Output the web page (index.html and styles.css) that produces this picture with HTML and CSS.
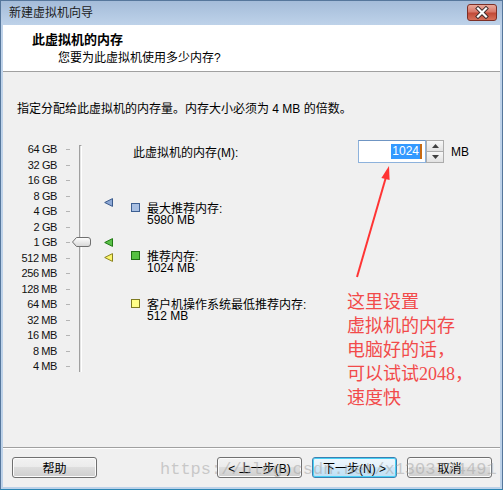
FILE: index.html
```html
<!DOCTYPE html>
<html lang="zh-CN">
<head>
<meta charset="utf-8">
<title>新建虚拟机向导</title>
<link rel="stylesheet" href="styles.css">
</head>
<body>
<div class="window">
  <div class="titlebar">
    <span class="title">新建虚拟机向导</span>
    <div class="close">
      <svg width="30" height="17" viewBox="0 0 30 17">
        <path d="M11 4.5 L19 12.5 M19 4.5 L11 12.5" stroke="#3a2a2a" stroke-width="4" stroke-linecap="square"/>
        <path d="M11 4.5 L19 12.5 M19 4.5 L11 12.5" stroke="#ffffff" stroke-width="2.2" stroke-linecap="square"/>
      </svg>
    </div>
  </div>
  <div class="client">
    <div class="header">
      <div class="h-title">此虚拟机的内存</div>
      <div class="h-sub">您要为此虚拟机使用多少内存?</div>
    </div>
    <div class="body">
      <p class="intro">指定分配给此虚拟机的内存量。内存大小必须为 4 MB 的倍数。</p>
      <div class="main">
        <div class="slider">
          <div class="labels">
            <div class="lab">64 GB</div>
            <div class="lab">32 GB</div>
            <div class="lab">16 GB</div>
            <div class="lab">8 GB</div>
            <div class="lab">4 GB</div>
            <div class="lab">2 GB</div>
            <div class="lab">1 GB</div>
            <div class="lab">512 MB</div>
            <div class="lab">256 MB</div>
            <div class="lab">128 MB</div>
            <div class="lab">64 MB</div>
            <div class="lab">32 MB</div>
            <div class="lab">16 MB</div>
            <div class="lab">8 MB</div>
            <div class="lab">4 MB</div>
          </div>
          <div class="ticks">
            <div class="tick"></div><div class="tick"></div><div class="tick"></div>
            <div class="tick"></div><div class="tick"></div><div class="tick"></div>
            <div class="tick"></div><div class="tick"></div><div class="tick"></div>
            <div class="tick"></div><div class="tick"></div><div class="tick"></div>
            <div class="tick"></div><div class="tick"></div><div class="tick"></div>
          </div>
          <div class="track"></div>
          <svg class="thumb" width="19" height="10" viewBox="0 0 19 10">
            <defs>
              <linearGradient id="tg" x1="0" y1="0" x2="0" y2="1">
                <stop offset="0" stop-color="#ffffff"/>
                <stop offset="1" stop-color="#d6d6d6"/>
              </linearGradient>
            </defs>
            <path d="M0.5 5 L4.5 0.5 L16 0.5 Q18.5 0.5 18.5 3 L18.5 7 Q18.5 9.5 16 9.5 L4.5 9.5 Z" fill="url(#tg)" stroke="#707070"/>
          </svg>
          <svg class="mark mark-max" width="10" height="9" viewBox="0 0 10 9">
            <path d="M0.7 4.5 L8.5 0.6 L8.5 8.4 Z" fill="#8ea9d6" stroke="#3a5a8c"/>
          </svg>
          <svg class="mark mark-rec" width="10" height="9" viewBox="0 0 10 9">
            <path d="M0.7 4.5 L8.5 0.6 L8.5 8.4 Z" fill="#5cc24a" stroke="#217a14"/>
          </svg>
          <svg class="mark mark-min" width="10" height="9" viewBox="0 0 10 9">
            <path d="M0.7 4.5 L8.5 0.6 L8.5 8.4 Z" fill="#fbf56a" stroke="#8a8220"/>
          </svg>
        </div>
        <div class="right">
          <div class="mem-row">
            <span class="mem-label">此虚拟机的内存(M):</span>
            <div class="spin">
              <div class="spin-input"><span class="sel">1024</span><span class="caret"></span></div>
              <div class="spin-btns">
                <div class="sb"><svg width="7" height="4" viewBox="0 0 7 4"><path d="M0 4 L3.5 0 L7 4 Z" fill="#404040"/></svg></div>
                <div class="sb"><svg width="7" height="4" viewBox="0 0 7 4"><path d="M0 0 L3.5 4 L7 0 Z" fill="#404040"/></svg></div>
              </div>
            </div>
            <span class="mb">MB</span>
          </div>
          <div class="legend">
            <div class="lg">
              <div class="lg-row"><span class="sq sq-max"></span><span>最大推荐内存:</span></div>
              <div class="lg-val">5980 MB</div>
            </div>
            <div class="lg">
              <div class="lg-row"><span class="sq sq-rec"></span><span>推荐内存:</span></div>
              <div class="lg-val">1024 MB</div>
            </div>
            <div class="lg">
              <div class="lg-row"><span class="sq sq-min"></span><span>客户机操作系统最低推荐内存:</span></div>
              <div class="lg-val">512 MB</div>
            </div>
          </div>
        </div>
      </div>
    </div>
    <div class="footer">
      <button class="btn">帮助</button>
      <div class="spacer"></div>
      <button class="btn">&lt; 上一步(B)</button>
      <button class="btn btn-default">下一步(N) &gt;</button>
      <button class="btn">取消</button>
    </div>
  </div>
</div>

<svg class="arrow" width="503" height="490" viewBox="0 0 503 490">
  <line x1="357" y1="277" x2="386" y2="177" stroke="#ff3434" stroke-width="2"/>
  <path d="M389 166 L381.4 178 L389.6 180 Z" fill="#ff3434"/>
</svg>
<div class="note">这里设置<br>虚拟机的内存<br>电脑好的话，<br>可以试试2048，<br>速度快</div>
<div class="watermark">https://blog.csdn.net/x1303774491</div>
</body>
</html>
```
FILE: styles.css
```css
* { box-sizing: border-box; }
html, body { margin: 0; padding: 0; }
body {
  position: relative;
  width: 503px;
  height: 490px;
  overflow: hidden;
  font-family: "Liberation Sans", "Noto Sans CJK SC", sans-serif;
  font-size: 12px;
  color: #000;
  background: #bcd0e7;
}
.window {
  width: 503px;
  height: 490px;
  display: flex;
  flex-direction: column;
  background: linear-gradient(#a4bcd9 0, #bfd3ea 25px, #bdd2e9 100%);
  border: 1px solid #56779c;
  border-bottom-color: #2b86b4;
  padding: 0 2px 2px;
}
.titlebar {
  height: 24px;
  display: flex;
  align-items: center;
  justify-content: space-between;
  padding: 0 3px 0 6px;
}
.title { font-size: 12px; line-height: 16px; color: #1b1b1b; }
.close {
  width: 30px;
  height: 17px;
  margin-top: -1px;
  border: 1px solid #7c2f26;
  border-radius: 3px;
  background: linear-gradient(#e9a99b 0, #d8786a 45%, #c14a38 55%, #d6705a 100%);
  display: flex;
}
.close svg { margin: -1px; }
.client {
  flex: 1;
  display: flex;
  flex-direction: column;
  background: #f0f0f0;
}
.header {
  height: 47px;
  background: #fff;
  border-bottom: 1px solid #a0a0a0;
  padding: 7px 0 0 29px;
}
.h-title { font-size: 13px; font-weight: bold; line-height: 16px; }
.h-sub { margin-top: 2px; padding-left: 26px; line-height: 16px; }
.body { flex: 1; padding-top: 29px; }
.intro { margin: 0 0 23px; padding-left: 14px; line-height: 16px; }
.main { display: flex; }
.slider {
  position: relative;
  width: 128px;
  display: flex;
  align-items: flex-start;
  padding-top: 2px;
}
.labels { width: 54px; text-align: right; }
.lab { height: 15.5px; line-height: 15.5px; font-size: 11px; letter-spacing: -0.4px; color: #111; }
.ticks { margin-left: 9px; width: 4px; }
.tick { height: 15.5px; display: flex; align-items: center; }
.tick::before { content: ""; width: 4px; height: 1px; background: #b4b4b4; }
.track {
  margin-left: 9px;
  margin-top: 3px;
  width: 3px;
  height: 227px;
  border-left: 1px solid #a0a0a0;
  border-right: 1px solid #ffffff;
  border-top: 1px solid #a0a0a0;
  background: #e4e4e4;
}
.thumb { position: absolute; left: 69px; top: 97px; }
.mark { position: absolute; left: 101px; }
.mark-max { top: 58px; }
.mark-rec { top: 98px; }
.mark-min { top: 113px; }
.right { flex: 1; }
.mem-row { display: flex; align-items: center; height: 23px; }
.mem-label { width: 227px; padding-left: 2px; }
.spin { display: flex; height: 23px; }
.spin-input {
  width: 68px;
  height: 23px;
  border: 1px solid #8db2dc;
  border-top-color: #6f95c3;
  background: #fff;
  display: flex;
  align-items: center;
  justify-content: flex-end;
  padding-right: 3px;
}
.sel { background: #3399ff; color: #fff; line-height: 15px; padding: 0 1px; }
.caret { width: 2px; height: 15px; background: #c86a12; }
.spin-btns {
  width: 18px;
  height: 23px;
  display: flex;
  flex-direction: column;
  border: 1px solid #acacac;
  background: #f4f4f4;
}
.sb { flex: 1; display: flex; align-items: center; justify-content: center; background: linear-gradient(#f8f8f8, #e2e2e2); }
.sb + .sb { border-top: 1px solid #acacac; }
.mb { margin-left: 7px; }
.legend { margin-top: 38px; display: flex; flex-direction: column; gap: 22px; }
.lg-row { display: flex; align-items: center; height: 13px; }
.lg-val { height: 13px; line-height: 13px; padding-left: 16px; }
.sq { width: 9px; height: 9px; border: 1px solid; margin-right: 7px; flex: none; }
.sq-max { background: #a8bfe2; border-color: #3d5f92; }
.sq-rec { background: #55c040; border-color: #1f6e12; }
.sq-min { background: #ffff88; border-color: #7d7a20; }
.footer {
  height: 40px;
  border-top: 1px solid #a0a0a0;
  box-shadow: inset 0 1px 0 #ffffff;
  display: flex;
  align-items: flex-start;
  gap: 10px;
  padding: 9px 8px 0 9px;
}
.spacer { flex: 1; margin-left: -10px; }
.btn {
  width: 85px;
  height: 21px;
  margin: 0;
  padding: 0;
  font: inherit;
  color: #000;
  border: 1px solid #707070;
  border-radius: 3px;
  background: linear-gradient(#f2f2f2 0, #ebebeb 50%, #dddddd 50%, #cfcfcf 100%);
  box-shadow: inset 0 0 0 1px #fcfcfc;
}
.btn-default {
  border-color: #3c7fb1;
  box-shadow: inset 0 0 0 1px #48d1f5;
  background: linear-gradient(#eef7fd 0, #e2f1fb 50%, #cfe8f8 50%, #bfe0f5 100%);
}
.arrow { position: absolute; left: 0; top: 0; pointer-events: none; }
.note {
  position: absolute;
  left: 347px;
  top: 290px;
  font-family: "Liberation Serif", "Noto Sans CJK SC", serif;
  font-size: 18px;
  line-height: 24px;
  color: #f24a4a;
  white-space: nowrap;
}
.watermark {
  position: absolute;
  left: 160px;
  top: 458px;
  font-family: "Liberation Mono", monospace;
  font-size: 17px;
  line-height: 24px;
  color: rgba(160, 160, 160, 0.5);
  white-space: nowrap;
  pointer-events: none;
}
```
